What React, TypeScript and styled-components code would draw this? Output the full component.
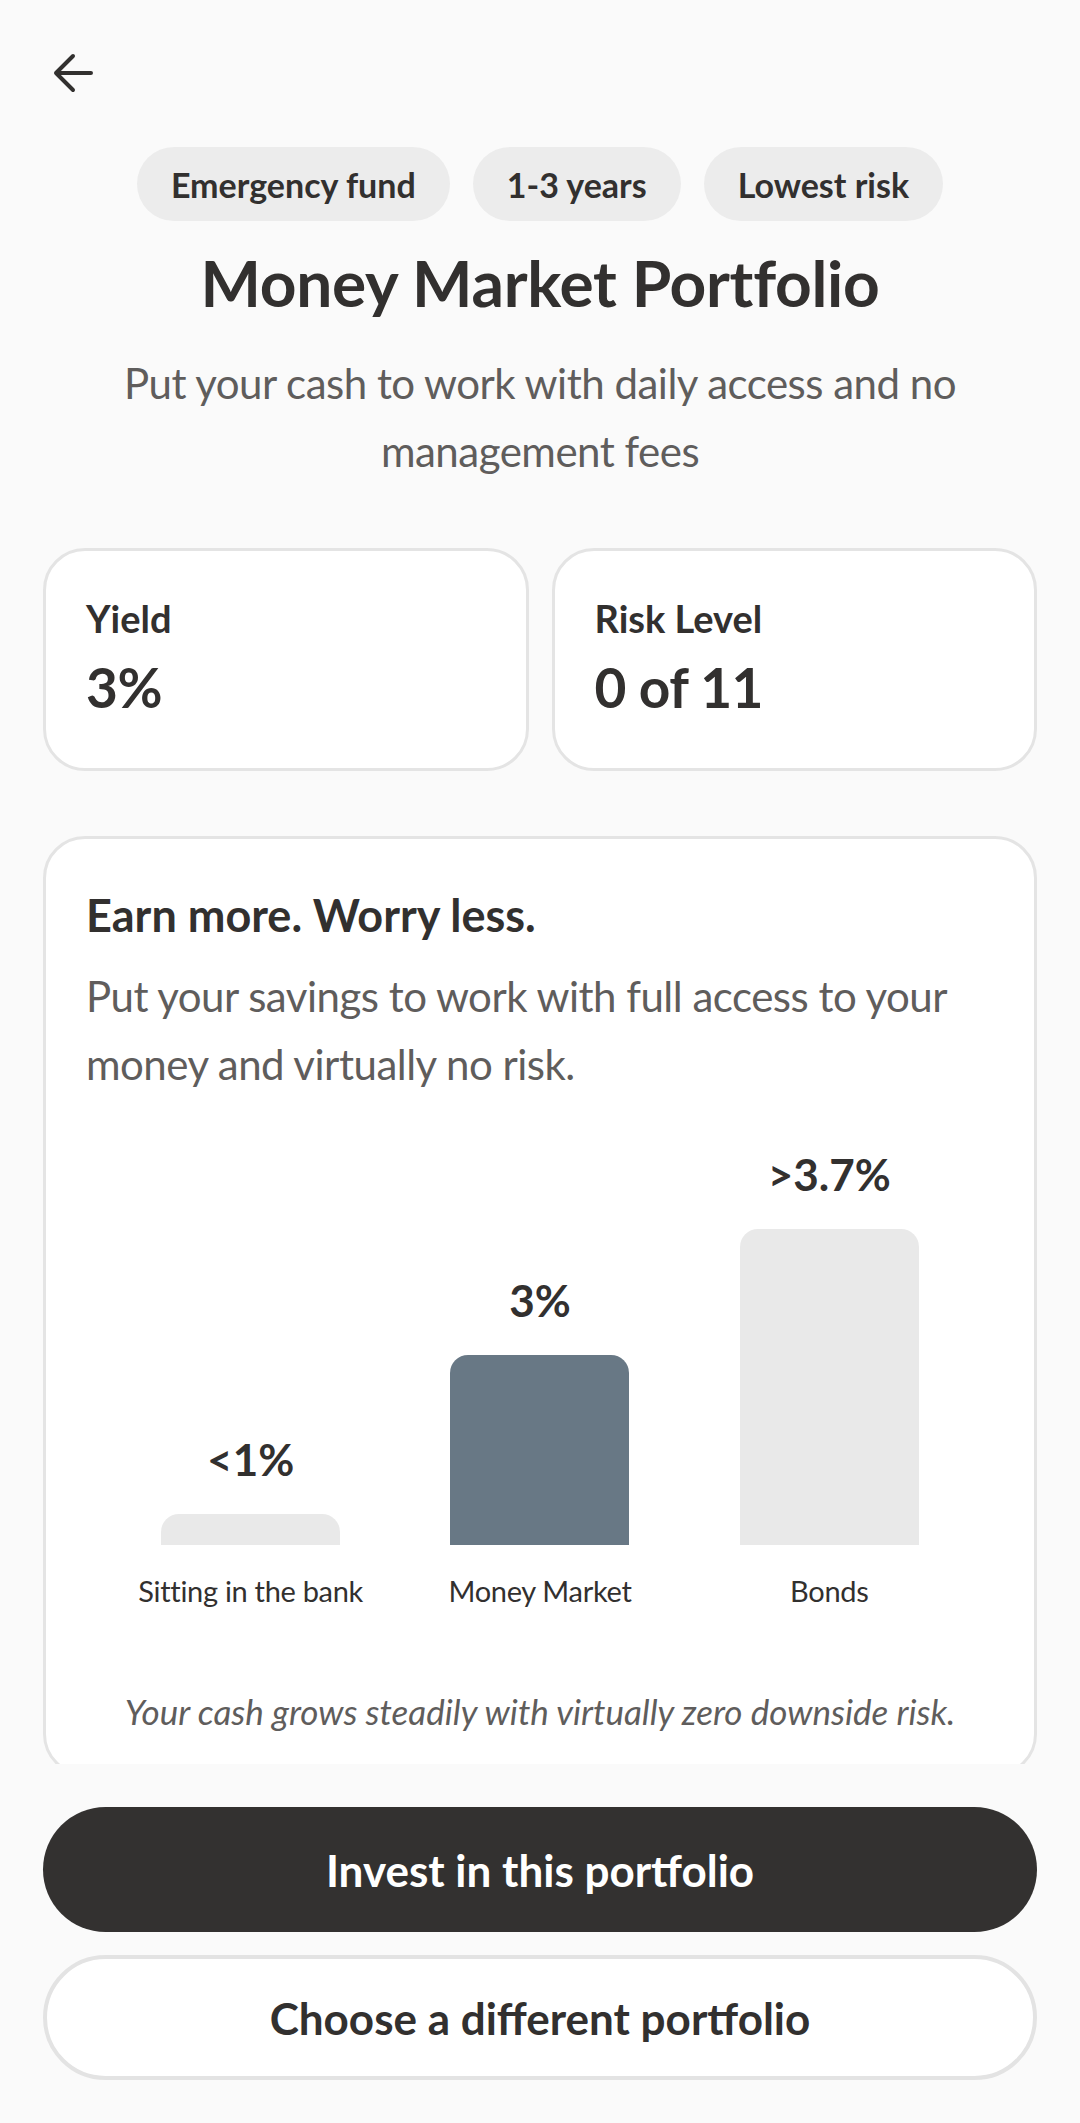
import React from 'react';
import styled, { createGlobalStyle } from 'styled-components';

const GlobalStyle = createGlobalStyle`
  * {
    box-sizing: border-box;
  }
  html, body {
    margin: 0;
    padding: 0;
    background: #fafafa;
    font-family: Lato, 'Noto Sans', sans-serif;
    color: #32302f;
  }
`;

const Screen = styled.div`
  display: flex;
  flex-direction: column;
  height: 100vh;
  background: #fafafa;
`;

const ScrollArea = styled.div`
  flex: 1;
  overflow: hidden;
  padding: 0 43px;
`;

const Header = styled.div`
  padding-top: 53px;
  padding-left: 10px;
  height: 93px;
  display: flex;
  align-items: flex-start;
`;

const BackButton = styled.button`
  border: none;
  background: none;
  padding: 0;
  width: 40px;
  height: 40px;
  cursor: pointer;
  color: #32302f;
`;

const TagRow = styled.div`
  display: flex;
  justify-content: center;
  gap: 23px;
  margin-top: 54px;
`;

const Tag = styled.span`
  height: 74px;
  padding: 0 34px;
  border-radius: 37px;
  background: #ececec;
  display: flex;
  align-items: center;
  font-size: 34px;
  font-weight: 700;
  color: #32302f;
`;

const Title = styled.h1`
  margin: 25px 0 0;
  font-size: 64px;
  line-height: 74px;
  font-weight: 700;
  text-align: center;
  letter-spacing: -0.3px;
  color: #32302f;
`;

const Subtitle = styled.p`
  margin: 29px 0 0;
  font-size: 42px;
  line-height: 68px;
  font-weight: 400;
  letter-spacing: -0.5px;
  text-align: center;
  color: #5f5d5c;
`;

const StatGrid = styled.div`
  display: grid;
  grid-template-columns: 1fr 1fr;
  gap: 23px;
  margin-top: 63px;
`;

const StatCard = styled.div`
  background: #fff;
  border: 3px solid #e4e4e4;
  border-radius: 42px;
  padding: 44px 40px 48px;
  height: 223px;
`;

const StatLabel = styled.div`
  font-size: 38px;
  line-height: 46px;
  font-weight: 700;
`;

const StatValue = styled.div`
  margin-top: 13px;
  font-size: 55px;
  line-height: 66px;
  font-weight: 700;
  letter-spacing: -0.5px;
`;

const InfoCard = styled.div`
  margin-top: 65px;
  background: #fff;
  border: 3px solid #e4e4e4;
  border-radius: 42px;
  padding: 48px 40px 40px;
`;

const InfoTitle = styled.h2`
  margin: 0;
  font-size: 45px;
  line-height: 56px;
  font-weight: 700;
`;

const InfoText = styled.p`
  margin: 19px 0 0;
  font-size: 42px;
  line-height: 68px;
  letter-spacing: -0.5px;
  color: #5f5d5c;
`;

const Chart = styled.div`
  margin-top: 49px;
  padding: 0 20px;
  display: grid;
  grid-template-columns: repeat(3, 1fr);
  align-items: end;
`;

const Column = styled.div`
  display: flex;
  flex-direction: column;
  align-items: center;
`;

const BarValue = styled.div`
  font-size: 44px;
  line-height: 54px;
  font-weight: 700;
  margin-bottom: 28px;
`;

const Bar = styled.div<{ $active?: boolean }>`
  width: 179px;
  border-radius: 18px 18px 0 0;
  background: ${(p) => (p.$active ? '#687885' : '#e9e9e9')};
`;

const LabelRow = styled.div`
  padding: 0 20px;
  display: grid;
  grid-template-columns: repeat(3, 1fr);
`;

const BarLabel = styled.div`
  margin-top: 26px;
  font-size: 29px;
  line-height: 40px;
  letter-spacing: -0.3px;
  text-align: center;
  white-space: nowrap;
`;

const Caption = styled.p`
  margin: 78px 0 0;
  font-size: 35px;
  line-height: 44px;
  font-style: italic;
  text-align: center;
  color: #5f5d5c;
`;

const Footer = styled.div`
  padding: 43px 43px;
  display: flex;
  flex-direction: column;
  gap: 23px;
  background: #fafafa;
`;

const ActionButton = styled.button<{ $primary?: boolean }>`
  height: 125px;
  border-radius: 63px;
  font-family: inherit;
  font-size: 44px;
  font-weight: 700;
  cursor: pointer;
  color: ${(p) => (p.$primary ? '#fff' : '#32302f')};
  background: ${(p) => (p.$primary ? '#333130' : '#fff')};
  border: ${(p) => (p.$primary ? 'none' : '4px solid #e3e3e3')};
`;

const bars = [
  { value: '<1%', label: 'Sitting in the bank', height: 31 },
  { value: '3%', label: 'Money Market', height: 190, active: true },
  { value: '>3.7%', label: 'Bonds', height: 316 },
];

const ArrowBack = () => (
  <svg width="40" height="40" viewBox="0 0 40 40" fill="none">
    <path
      d="M3 20H38M20 3L3 20L20 37"
      stroke="currentColor"
      strokeWidth="4"
      strokeLinecap="round"
      strokeLinejoin="round"
    />
  </svg>
);

const App: React.FC = () => {
  return (
    <>
      <GlobalStyle />
      <Screen>
        <ScrollArea>
          <Header>
            <BackButton aria-label="Back">
              <ArrowBack />
            </BackButton>
          </Header>
          <TagRow>
            <Tag>Emergency fund</Tag>
            <Tag>1-3 years</Tag>
            <Tag>Lowest risk</Tag>
          </TagRow>
          <Title>Money Market Portfolio</Title>
          <Subtitle>Put your cash to work with daily access and no management fees</Subtitle>
          <StatGrid>
            <StatCard>
              <StatLabel>Yield</StatLabel>
              <StatValue>3%</StatValue>
            </StatCard>
            <StatCard>
              <StatLabel>Risk Level</StatLabel>
              <StatValue>0 of 11</StatValue>
            </StatCard>
          </StatGrid>
          <InfoCard>
            <InfoTitle>Earn more. Worry less.</InfoTitle>
            <InfoText>Put your savings to work with full access to your money and virtually no risk.</InfoText>
            <Chart>
              {bars.map((b) => (
                <Column key={b.label}>
                  <BarValue>{b.value}</BarValue>
                  <Bar $active={b.active} style={{ height: b.height }} />
                </Column>
              ))}
            </Chart>
            <LabelRow>
              {bars.map((b) => (
                <BarLabel key={b.label}>{b.label}</BarLabel>
              ))}
            </LabelRow>
            <Caption>Your cash grows steadily with virtually zero downside risk.</Caption>
          </InfoCard>
        </ScrollArea>
        <Footer>
          <ActionButton $primary>Invest in this portfolio</ActionButton>
          <ActionButton>Choose a different portfolio</ActionButton>
        </Footer>
      </Screen>
    </>
  );
};

export default App;
